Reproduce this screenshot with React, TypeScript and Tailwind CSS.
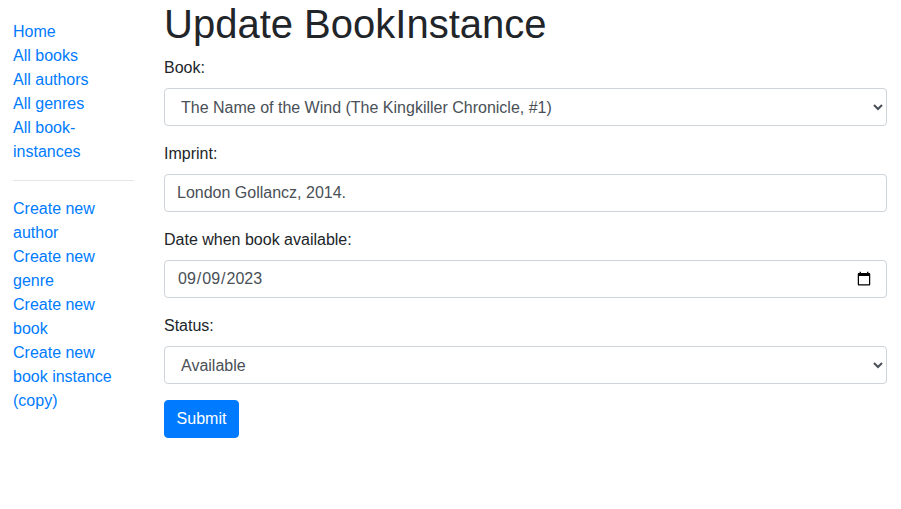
import React from "react";

const NAV_TOP = ["Home", "All books", "All authors", "All genres", "All book-instances"];
const NAV_CREATE = ["Create new author", "Create new genre", "Create new book", "Create new book instance (copy)"];

const field =
  "block w-full h-[38px] px-3 py-[6px] text-base leading-6 text-[#495057] bg-white border border-[#ced4da] rounded";

export default function App() {
  return (
    <div className="flex min-h-[509px] bg-white text-[#212529] font-['Liberation_Sans',Arial,sans-serif] text-base leading-6">
      {/* Sidebar */}
      <div className="w-[150px] shrink-0 pl-[13px] pr-[16px]">
        <ul className="mt-5">
          {NAV_TOP.map((t) => (
            <li key={t} className="max-w-[114px]">
              <a href="#" className="text-[#007bff]">
                {t}
              </a>
            </li>
          ))}
          <hr className="my-4 border-0 border-t border-[rgba(0,0,0,0.1)]" />
          {NAV_CREATE.map((t) => (
            <li key={t} className="max-w-[114px]">
              <a href="#" className="text-[#007bff]">
                {t}
              </a>
            </li>
          ))}
        </ul>
      </div>

      {/* Content */}
      <div className="flex-1 px-[14px]">
        <h1 className="text-[40px] leading-[48px] font-medium mb-2">Update BookInstance</h1>
        <form>
          <div className="mb-4">
            <label className="block mb-2">Book:</label>
            <select className={field} defaultValue="wind">
              <option value="wind">The Name of the Wind (The Kingkiller Chronicle, #1)</option>
            </select>
          </div>
          <div className="mb-4">
            <label className="block mb-2">Imprint:</label>
            <input className={field} type="text" defaultValue="London Gollancz, 2014." />
          </div>
          <div className="mb-4">
            <label className="block mb-2">Date when book available:</label>
            <input className={field} type="date" defaultValue="2023-09-09" />
          </div>
          <div className="mb-4">
            <label className="block mb-2">Status:</label>
            <select className={field} defaultValue="Available">
              <option>Maintenance</option>
              <option>Available</option>
              <option>Loaned</option>
              <option>Reserved</option>
            </select>
          </div>
          <button type="button" className="w-[75px] h-[38px] text-white bg-[#007bff] border border-[#007bff] rounded">
            Submit
          </button>
        </form>
      </div>
    </div>
  );
}
